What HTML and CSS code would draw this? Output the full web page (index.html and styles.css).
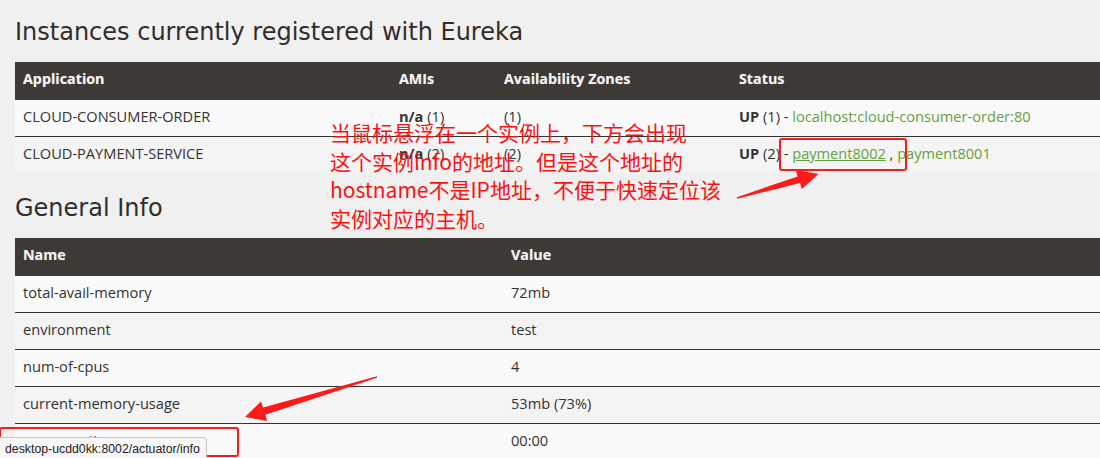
FILE: index.html
```html
<!DOCTYPE html>
<html lang="en">
<head>
<meta charset="utf-8">
<title>Eureka</title>
<link rel="stylesheet" href="styles.css">
</head>
<body>
<div class="page">
  <h2 class="title title-first">Instances currently registered with Eureka</h2>
  <table class="grid">
    <colgroup>
      <col class="c-app"><col class="c-ami"><col class="c-az"><col>
    </colgroup>
    <thead>
      <tr><th>Application</th><th>AMIs</th><th>Availability Zones</th><th>Status</th></tr>
    </thead>
    <tbody>
      <tr class="odd">
        <td>CLOUD-CONSUMER-ORDER</td>
        <td><b>n/a</b> (1)</td>
        <td>(1)</td>
        <td><b>UP</b> (1) - <a class="link" href="#">localhost:cloud-consumer-order:80</a></td>
      </tr>
      <tr class="even last">
        <td>CLOUD-PAYMENT-SERVICE</td>
        <td><b>n/a</b> (2)</td>
        <td>(2)</td>
        <td><b>UP</b> (2) - <a class="link hovered" href="#">payment8002</a> , <a class="link" href="#">payment8001</a></td>
      </tr>
    </tbody>
  </table>

  <h2 class="title title-second">General Info</h2>
  <table class="grid">
    <colgroup>
      <col class="c-name"><col>
    </colgroup>
    <thead>
      <tr><th>Name</th><th>Value</th></tr>
    </thead>
    <tbody>
      <tr class="odd"><td>total-avail-memory</td><td>72mb</td></tr>
      <tr class="even"><td>environment</td><td>test</td></tr>
      <tr class="odd"><td>num-of-cpus</td><td>4</td></tr>
      <tr class="even"><td>current-memory-usage</td><td>53mb (73%)</td></tr>
      <tr class="odd last"><td>server-uptime</td><td>00:00</td></tr>
    </tbody>
  </table>
</div>

<div class="note">当鼠标悬浮在一个实例上，下方会出现<br>这个实例info的地址。但是这个地址的<br>hostname不是IP地址，不便于快速定位该<br>实例对应的主机。</div>

<div class="mark mark-link"></div>
<div class="mark mark-status"></div>

<svg class="arrows" width="1100" height="458" viewBox="0 0 1100 458" xmlns="http://www.w3.org/2000/svg">
  <polygon fill="#ff1a1a" points="736.9,197.2 797.6,176.4 795.8,170.0 818.5,174 801.8,189.0 800.0,183.0 737.1,198.8"/>
  <polygon fill="#ff1a1a" points="376.9,376.2 263.1,407.4 261.0,401.4 245,417 267.1,421.0 265.3,414.8 377.1,377.8"/>
</svg>

<div class="statusbar">desktop-ucdd0kk:8002/actuator/info</div>
</body>
</html>
```
FILE: styles.css
```css
html, body {
  margin: 0;
  padding: 0;
}
body {
  width: 1100px;
  height: 458px;
  overflow: hidden;
  position: relative;
  background: #f0f0f0;
  font-family: "Open Sans", "Noto Sans", sans-serif;
  font-size: 14px;
  color: #333;
}
.page {
  padding-left: 15px;
}
.title {
  font-family: "DejaVu Sans", sans-serif;
  font-weight: normal;
  font-size: 24px;
  line-height: 30px;
  color: #302d2a;
  margin: 0;
}
.title-first {
  padding-top: 17px;
  margin-bottom: 15px;
}
.title-second {
  margin-top: 20px;
  margin-bottom: 15px;
}
.grid {
  width: 100%;
  table-layout: fixed;
  border-collapse: separate;
  border-spacing: 0;
}
.c-app { width: 376px; }
.c-ami { width: 105px; }
.c-az { width: 235px; }
.c-name { width: 488px; }
.grid th {
  background: #3d3934;
  color: #f4f4f4;
  font-weight: 700;
  font-size: 14.3px;
  text-align: left;
  padding: 7px 8px 11px;
  line-height: 20px;
  text-shadow: 0 0 1px rgba(255,255,255,0.35);
}
.grid td {
  padding: 6px 8px 10px;
  font-size: 14.6px;
  line-height: 20px;
  border-bottom: 1px solid #333;
  white-space: nowrap;
}
.grid tr.last td {
  border-bottom: 0;
}
.grid tr.odd td { background: #fafafa; }
.grid tr.even td { background: #f4f4f4; }
.grid b { font-weight: 700; color: #333; }
.link {
  color: #62a23a;
  text-decoration: none;
}
.link.hovered {
  text-decoration: underline;
}
.note {
  position: absolute;
  left: 330px;
  top: 118px;
  font-family: "Noto Sans CJK SC", "Noto Sans", sans-serif;
  font-size: 21px;
  line-height: 28.5px;
  color: #ff1010;
  white-space: nowrap;
}
.mark {
  position: absolute;
  border: 2px solid #ff1a1a;
  border-radius: 3px;
  box-sizing: border-box;
}
.mark-status {
  left: 779px;
  top: 138px;
  width: 128px;
  height: 33px;
}
.mark-link {
  left: -1px;
  top: 427px;
  width: 240px;
  height: 30px;
}
.arrows {
  position: absolute;
  left: 0;
  top: 0;
  pointer-events: none;
}
.statusbar {
  position: absolute;
  left: 0;
  top: 437px;
  padding: 2px 6px 0 5px;
  height: 24px;
  box-sizing: border-box;
  background: #f7f7f7;
  border: 1px solid #c8c8c8;
  border-left: 0;
  border-bottom: 0;
  border-top-right-radius: 4px;
  font-family: "Liberation Sans", Arial, sans-serif;
  font-size: 12.3px;
  line-height: 18px;
  color: #222;
}
```
